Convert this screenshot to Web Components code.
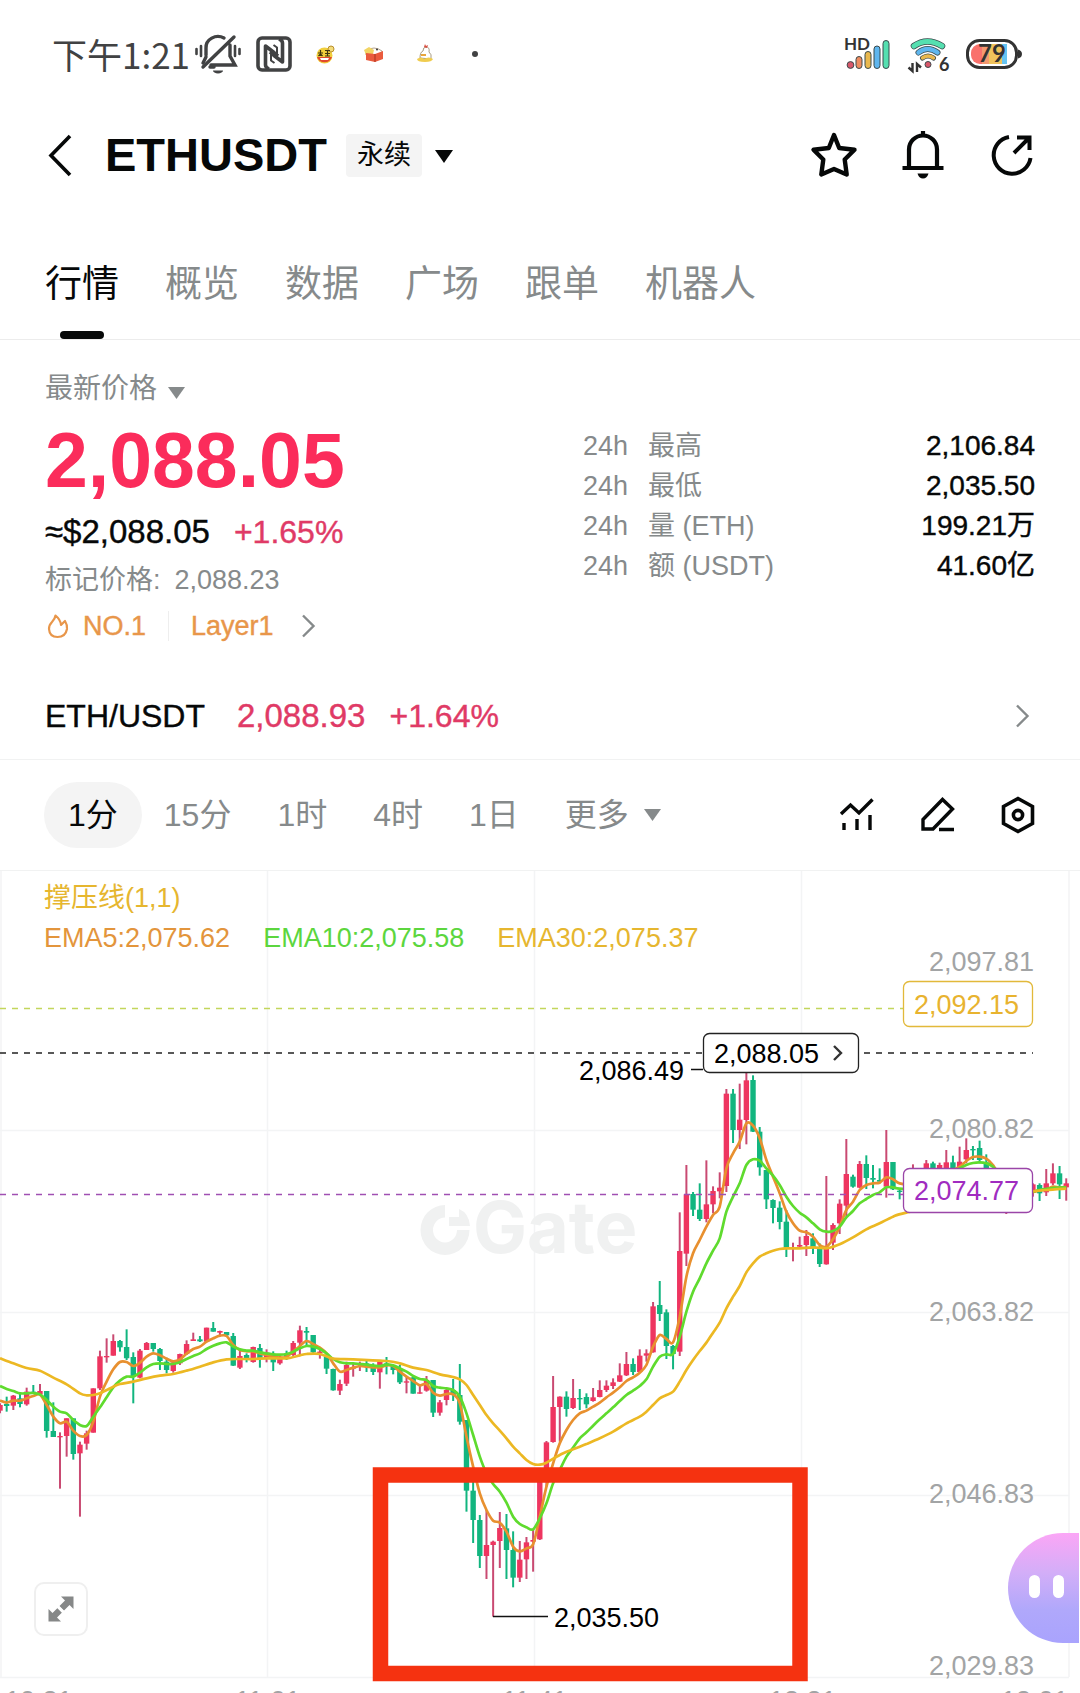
<!DOCTYPE html>
<html lang="zh-CN">
<head>
<meta charset="utf-8">
<meta name="viewport" content="width=device-width, initial-scale=1">
<title>ETHUSDT 永续</title>
<style>
  body {
    margin: 0;
    background: #fff;
    color: #060808;
    font-family: "Liberation Sans", "Noto Sans CJK SC", sans-serif;
    font-size: 27px;
    --gutter: 45px;
    --muted: #868a8b;
    --line: #f1f2f2;
    --down: #e03a66;
    --hot: #e8964a;
  }
</style>
</head>
<body>
<market-page></market-page>

<script>
const base = `
  *, *::before { box-sizing: border-box; }
  svg { display: block; flex: none; overflow: visible; }
  a { color: inherit; text-decoration: none; }
  button { font: inherit; color: inherit; background: none; border: 0; padding: 0; margin: 0; cursor: pointer; }
`;
function define(name, html, setup) {
  customElements.define(name, class extends HTMLElement {
    constructor() {
      super();
      this.attachShadow({ mode: "open" }).innerHTML = `<style>${base}</style>` + html;
    }
    connectedCallback() { if (setup) setup.call(this, this.shadowRoot); }
  });
}

/* Phone status bar */
define("status-bar", `
<style>
  :host { display: flex; align-items: center; height: 108px; padding: 0 58px 0 52px; color: #414243; }
  time { font-family: "Noto Sans CJK SC", sans-serif; font-size: 35px; line-height: 48px; margin-right: 4px; }
  .left, .right { display: flex; align-items: center; }
  .right { margin-left: auto; gap: 15px; }
  text { font-family: Lato, sans-serif; font-weight: 700; fill: #333; }
</style>
<div class="left">
  <time>下午1:21</time>
  <svg width="48" height="42" viewBox="0 0 48 42" fill="none" stroke="#414243" stroke-width="3.4" stroke-linecap="round">
    <path d="M12 22V15a12 11 0 0 1 18-10M36 12v11l5 9H17M9 34 40 4M16 34h4"/>
    <path d="M12 24l-3 6" />
    <path d="M19 37.500a5 3 0 0 0 10 0z" fill="#414243" stroke="none"/>
    <path d="M2.500 16v5M7 13v10M41 13v10M45.500 16v5" stroke-width="2.600"/>
  </svg>
  <svg style="margin-left:14px" width="36" height="36" viewBox="0 0 36 36" fill="none" stroke="#414243" stroke-width="3.600" stroke-linejoin="round">
    <rect x="2" y="2" width="32" height="32" rx="4"/>
    <path d="M13 33c-2.500-1-3.500-2-3.500-4V10L18 16.500 22 20M23 3c2.500 1 3.500 2 3.500 4v19L18 19.500 14 16"/>
    <path d="M15 14v10.500l3.500 2.500M21 22V11.500L17.500 9" stroke-width="2"/>
  </svg>
  <svg style="margin-left:24px" width="19" height="19" viewBox="0 0 19 19">
    <circle cx="8.500" cy="10.500" r="8" fill="#f1cf3c"/><path d="M1 12h15a8 8 0 0 1-15 0z" fill="#e2492f"/>
    <path d="M4 13h9l-1 2H5z" fill="#fff"/><circle cx="15" cy="4" r="3" fill="#f3dc7c" stroke="#b98e2c"/>
    <path d="M2 8h5M4.500 5v6M2.500 11l2-2 2 2M9 5.500h5M11.500 5v6M9 8.500h5M9 11h5" stroke="#3f360f" stroke-width="1.200"/>
  </svg>
  <svg style="margin-left:29px" width="21" height="16" viewBox="0 0 21 16">
    <path d="M2 5q8-6 16 0v4H2z" fill="#fff" stroke="#b5a490"/><path d="M0 4l5-3 5 3-1 4-7 1z" fill="#f2d564"/>
    <path d="M2 7l9 1 8-3v8l-8 3-9-2z" fill="#ea5b3d"/><path d="M11 8v8" stroke="#a93320"/><circle cx="13" cy="3.500" r="1" fill="#333"/>
  </svg>
  <svg style="margin-left:31px" width="18" height="20" viewBox="0 0 18 20">
    <path d="M4 14q0-6 3-7 0-4 3-4 4 0 3 5 3 2 2 7z" fill="#fff" stroke="#a79a81"/>
    <path d="M1 15q4-3 7 0 5-3 9 0-1 3-8 3-8 0-8-3z" fill="#f0cc4e"/><path d="M8 3l1-3 1 2 2-1-1 3z" fill="#d94d40"/><path d="M5 10h5v2H5z" fill="#e8a53c"/>
  </svg>
  <svg style="margin-left:38px" width="6" height="6"><circle cx="3" cy="3" r="3" fill="#414243"/></svg>
</div>
<div class="right">
  <svg width="46" height="36" viewBox="0 0 46 36" stroke="#3b4a4c" stroke-width="1">
    <text x="0" y="14" font-size="17" stroke="none">HD</text>
    <circle cx="6.500" cy="29" r="3.400" fill="#d9576a"/>
    <rect x="12" y="20.500" width="6" height="12" rx="3" fill="#ee8c60"/>
    <rect x="21" y="15.500" width="6" height="17" rx="3" fill="#e9b84e"/>
    <rect x="30" y="10" width="6" height="22.500" rx="3" fill="#5fb6ee"/>
    <rect x="39" y="4.500" width="6" height="28" rx="3" fill="#55dfb0"/>
  </svg>
  <svg width="46" height="38" viewBox="0 0 46 38">
    <g fill="none" stroke-linecap="round">
      <path d="M9 11q13-9 28 0" stroke="#3b4a4c" stroke-width="6.500"/><path d="M9 11q13-9 28 0" stroke="#55dfb0" stroke-width="5"/>
      <path d="M13.500 17.500q9-7 19 0" stroke="#3b4a4c" stroke-width="6"/><path d="M13.500 17.500q9-7 19 0" stroke="#5fb6ee" stroke-width="4.500"/>
      <path d="M17.500 23q5.500-4 11 0" stroke="#3b4a4c" stroke-width="5"/><path d="M17.500 23q5.500-4 11 0" stroke="#e9b84e" stroke-width="3.500"/>
    </g>
    <circle cx="23" cy="29.500" r="3" fill="#d9576a" stroke="#3b4a4c"/>
    <path d="M7.500 28v8l-4-3.500M12 37v-8l4 3.500" fill="none" stroke="#333" stroke-width="2.400"/>
    <text x="34" y="36" font-size="18">6</text>
  </svg>
  <svg width="56" height="30" viewBox="0 0 56 30">
    <rect x="1.500" y="1.500" width="49" height="27" rx="12" fill="#fff" stroke="#333" stroke-width="3"/>
    <path d="M52 10.500q4 1 4 4.500t-4 4.500z" fill="#333"/>
    <path d="M14 5h3v20h-3a9 9 0 0 1-9-9v-2a9 9 0 0 1 9-9z" fill="#f9716c"/>
    <path d="M16 5h7v20h-7z" fill="#f49a70"/><path d="M23 5h13v20H23z" fill="#f0c35c"/><path d="M36 5h5v20h-5z" fill="#66c4f2"/>
    <text x="12" y="23" font-size="24" fill="#222">79</text>
  </svg>
</div>`);

/* Title row */
define("pair-header", `
<style>
  :host { display: flex; align-items: center; height: 92px; padding: 2px var(--gutter) 0; }
  button { display: flex; align-items: center; }
  h1 { margin: 0 0 0 32px; font-size: 47px; line-height: 56px; font-weight: 700; }
  .kind { margin-left: 19px; gap: 13px; }
  .kind span { background: #f4f4f4; border-radius: 4px; padding: 0 11px; line-height: 43px; font-size: 27px; }
  .actions { margin-left: auto; display: flex; gap: 41px; }
</style>
<button aria-label="返回"><svg width="28" height="46" viewBox="0 0 28 46" fill="none" stroke="#060808" stroke-width="3.600"><path d="M25 4 6 23.500 25 43"/></svg></button>
<h1><slot></slot></h1>
<button class="kind"><span><slot name="kind"></slot></span><svg width="18" height="16" viewBox="0 0 18 16"><path d="M0 3h18L9 16z" fill="#060808"/></svg></button>
<div class="actions">
  <button aria-label="收藏"><svg width="48" height="48" viewBox="0 0 48 48" fill="none" stroke="#060808" stroke-width="4.400" stroke-linejoin="round"><path d="M25 4 30.200 17 45.500 18.800 35.700 28.500 37.700 43.500 25 38 12.300 43.500 14.300 28.500 4.500 18.800 19.800 17z"/></svg></button>
  <button aria-label="提醒"><svg width="48" height="48" viewBox="0 0 48 48" fill="none" stroke="#060808" stroke-width="4.200"><path d="M25 0v5M11 36V18.500a14 14 0 0 1 28 0V36M4.500 37h41"/><path d="M19.500 42.500h11q-1.500 5-5.500 5t-5.500-5z" fill="#060808" stroke="none"/></svg></button>
  <button aria-label="分享"><svg width="48" height="48" viewBox="0 0 48 48" fill="none" stroke="#060808" stroke-width="4"><path d="M22 6A18.500 18.500 0 1 0 43.500 27"/><path d="M27 22 41 8M30 6.500h12.500V19"/></svg></button>
</div>`);

/* Section tabs */
define("market-tabs", `
<style>
  :host { display: flex; gap: 46px; height: 140px; padding: 58px var(--gutter) 0; border-bottom: 1px solid #ececec; }
</style><slot></slot>`);
define("market-tab", `
<style>
  :host { display: block; color: var(--muted); font-size: 37px; line-height: 54px; }
  :host([active]) { color: #060808; }
  a { display: flex; flex-direction: column; align-items: center; gap: 19px; }
  :host([active]) a::after { content: ""; width: 44px; height: 8px; border-radius: 4px; background: #060808; }
</style><a href="#"><slot></slot></a>`);

/* Price summary */
define("stat-row", `
<style>
  :host { display: flex; line-height: 40px; }
  .k { color: var(--muted); display: flex; gap: 20px; }
  .v { margin-left: auto; font-size: 28px; -webkit-text-stroke: 0.4px currentColor; }
</style><span class="k"><span>24h</span><span><slot name="label"></slot></span></span><span class="v"><slot></slot></span>`);
define("price-summary", `
<style>
  :host { display: grid; grid-template-columns: 538fr 452fr; height: 333px; padding: 31px var(--gutter) 0; }
  .stats { padding-top: 55px; }
  .last { display: flex; align-items: center; gap: 11px; line-height: 36px; color: var(--muted); font-size: 28px; }
  .price { margin-top: 13px; font-size: 77px; line-height: 80px; font-weight: 700; color: #fb2c5b; }
  .fiat { display: flex; gap: 24px; margin-top: 12px; font-size: 33px; line-height: 40px; -webkit-text-stroke: 0.4px currentColor; }
  .fiat b { font-weight: 400; font-size: 32px; color: var(--down); }
  .mark { margin-top: 10px; line-height: 36px; color: var(--muted); display: flex; gap: 14px; }
  .tags { display: flex; align-items: center; margin-top: 10px; line-height: 36px; color: var(--hot); -webkit-text-stroke: 0.4px currentColor; }
  .tags i { width: 1px; height: 30px; background: #eee; margin: 0 22px; }
  .tags svg { margin: 0; }
</style>
<div>
  <button class="last">最新价格<svg width="17" height="12" viewBox="0 0 17 12" style="margin-top:8px"><path d="M0 0h17L8.500 12z" fill="#868a8b"/></svg></button>
  <div class="price">2,088.05</div>
  <div class="fiat"><span>≈$2,088.05</span><b>+1.65%</b></div>
  <div class="mark"><span>标记价格:</span><span>2,088.23</span></div>
  <a class="tags" href="#">
    <svg width="26" height="28" viewBox="0 0 26 28" fill="none" stroke="#e8964a" stroke-width="2.200" stroke-linejoin="round" style="margin-right:12px"><path d="M10.500 3.500q5 4 5.500 9.500l4-4q2.500 4 2 8-1.500 8-9.500 8T4 17q0-4 3-7 3-3 3.500-6.500z"/></svg>
    <span>NO.1</span><i></i><span>Layer1</span>
    <svg width="16" height="26" viewBox="0 0 16 26" fill="none" stroke="#868a8b" stroke-width="2.400" style="margin-left:26px"><path d="M3 2.500 13.500 13 3 23.500"/></svg>
  </a>
</div>
<div class="stats"><slot></slot></div>`);

/* Spot pair link */
define("spot-row", `
<style>
  :host { display: block; border-bottom: 1px solid var(--line); }
  a { display: flex; align-items: center; gap: 24px; height: 86px; padding: 0 50px 0 var(--gutter); font-size: 32px; -webkit-text-stroke: 0.4px currentColor; }
  .down { color: var(--down); }
  .price { font-size: 33px; }
  .name { margin-right: 8px; }
  svg { margin-left: auto; }
</style>
<a href="#"><span class="name"><slot></slot></span><span class="down price"><slot name="price"></slot></span><span class="down"><slot name="change"></slot></span>
<svg width="16" height="26" viewBox="0 0 16 26" fill="none" stroke="#868a8b" stroke-width="2.400"><path d="M3 2.500 13.500 13 3 23.500"/></svg></a>`);

/* Interval picker */
define("interval-bar", `
<style>
  :host { display: flex; align-items: center; height: 111px; padding: 0 var(--gutter) 0 44px; border-bottom: 1px solid var(--line); font-size: 32px; line-height: 66px; color: var(--muted); }
  .list, .tools { display: flex; align-items: center; }
  .list { gap: 46px; }
  .list .on { color: #060808; background: #f4f4f4; border-radius: 33px; padding: 0 24px; margin-right: -24px; }
  .more { display: flex; align-items: center; gap: 15px; }
  .tools { margin-left: auto; gap: 45px; }
</style>
<div class="list">
  <button class="on">1分</button><button>15分</button><button>1时</button><button>4时</button><button>1日</button>
  <button class="more">更多<svg width="17" height="12" viewBox="0 0 17 12"><path d="M0 0h17L8.500 12z" fill="#868a8b"/></svg></button>
</div>
<div class="tools">
  <button aria-label="指标"><svg width="36" height="36" viewBox="0 0 36 36" fill="none" stroke="#060808" stroke-width="3.400"><path d="M2 17 11.500 8 20 16 33.500 2.500M5 26v7M18 22v11M31 18v15"/></svg></button>
  <button aria-label="画线"><svg width="36" height="36" viewBox="0 0 36 36" fill="none" stroke="#060808" stroke-width="3.400"><path d="M3 32V22.500L22.500 2.500 32.500 12 13 32zM19 32.500h15"/></svg></button>
  <button aria-label="设置"><svg width="34" height="38" viewBox="0 0 34 38" fill="none" stroke="#060808" stroke-width="3.600"><path d="M17 2.500 31.500 10.500V27.500L17 35.500 2.500 27.500V10.500z"/><circle cx="17" cy="19" r="4.600"/></svg></button>
</div>`);

/* Candle rows: direction, high, body top, body bottom, low, in thirds of a pixel.
   The first block of rows is measured from 1280, the second from 1030. */
const early = `r370,375,392,400 g350,372,378,395 r345,347,377,390 g340,355,372,382 r323,335,373,377 g315,335,342,342 r312,333,343,345
g333,333,453,473 g367,453,471,471 r457,468,472,626 r415,415,468,530 g415,415,522,539 r485,494,520,710 r452,460,491,509 r325,325,458,458
r212,229,325,330 r175,228,232,248 r163,183,227,227 g180,183,202,215 g148,201,235,240 g217,231,290,370 r207,212,293,295 r186,189,210,210
g189,189,207,215 g204,207,243,270 g233,245,270,280 r240,247,273,278 r221,222,250,255 r181,192,222,225 r158,178,183,183 g168,178,184,186
r143,143,185,185 g126,144,155,155 r152,153,158,170 g156,156,166,170 g159,168,257,258 r208,228,263,267 g220,225,235,247 r200,201,246,248
g192,204,235,263 r208,218,235,247 g214,225,247,273 r225,230,250,254 g212,222,230,240 r183,189,225,228 r137,151,188,225 g141,153,158,200
g165,165,217,220 r210,215,220,236 g220,230,266,282 g266,267,331,332 r299,312,332,345 r245,255,311,318 r250,262,266,290 r245,250,255,273
g243,250,258,276 g250,255,276,285 r245,245,277,326 g231,250,258,283 g255,258,270,283 g255,268,307,312 r288,304,306,340 g290,292,341,341
r315,337,341,341 r288,300,332,335 g300,300,398,411 r360,367,398,407 r327,330,360,376 g297,330,345,363 g252,345,425,434 g420,420,632,695
g600,632,720,789 g705,720,828,864 r690,795,828,897 r782,785,795,1010 r696,744,783,864 g702,745,810,897 g754,810,893,922 r783,839,893,906
r771,787,838,897 r750,780,785,875 r565,600,778,780 r483,487,605,620 r288,381,486,488 r349,350,381,485 g334,350,387,410 r297,354,384,387
g327,354,357,390 g340,351,373,385 r324,352,363,365 r301,330,351,352 r301,317,330,336 r295,307,318,327 r250,286,305,306 r216,252,286,288
g235,252,276,285 r208,227,276,278 r208,220,227,245 r66,79,217,218 g3,75,102,123 g88,97,198,237 g195,198,222,268`;
const late = `r547,663,965,978 r405,493,671,708 g486,492,539,558 g460,539,567,573 r391,523,567,577 r469,483,523,550 r427,473,484,505
r177,191,468,486 g177,191,300,339 r161,269,300,357 r120,151,270,343 g136,150,305,306 g291,305,412,437 g420,420,508,537 g508,510,534,580
g514,533,576,598 g540,575,653,681 r638,652,656,694 r620,645,650,655 r600,618,645,678 g610,625,655,672 g640,655,702,711 r438,650,703,704
r580,585,638,660 r508,521,580,612 r327,432,527,560 g434,440,470,473 r393,402,473,475 g376,402,444,477 g405,444,449,475 g415,450,455,460
r300,396,470,503 g396,396,478,480 g475,482,485,508 g430,450,480,490 r403,415,450,460 g415,430,460,470 r390,400,440,450 g395,400,440,450
r398,405,440,450 r360,397,430,440 g377,397,425,440 r350,395,420,430 r325,360,388,400 g348,357,361,390 g332,354,390,400 g373,397,430,440
g420,430,470,480 g430,440,470,480 r430,440,470,552 g430,440,470,480 r440,450,480,490 g440,450,480,490 r460,463,488,500 g460,465,490,513
r417,460,487,498 r400,430,460,465 g408,430,463,507 r445,460,472,512`;
const ema5 = {
  early: "0:362 1:368 2:362 3:362 4:355 5:348 6:344 7:375 8:410 9:430 10:425 11:452 12:468 13:465 14:425 15:350 16:305 17:268 18:246 19:246 20:258 21:248 22:230 23:220 24:226 25:236 26:244 27:238 28:221 29:207 30:200 31:185 32:175 33:167 34:168 35:195 36:210 37:214 38:214 39:220 40:225 41:230 42:233 43:230 44:215 45:198 46:183 47:192 48:203 49:220 50:250 51:275 52:270 53:263 54:258 55:260 56:262 57:262 58:256 59:258 60:275 61:290 62:303 63:316 64:312 65:338 66:347 67:342 68:343 69:370 70:470 71:560 72:640 73:690 74:722 75:728 76:755 77:800 78:814 79:805 80:793 81:710 82:620 83:550 84:490 85:450 86:420 87:400 88:392 89:380 90:368 91:352 92:338 93:322 94:303 95:292 96:278 97:255 98:200 99:165 100:177 101:187",
  late: "102:860 103:740 104:670 105:630 106:590 107:555 108:530 109:415 110:370 111:335 112:280 113:287 114:325 115:390 116:440 117:490 118:545 119:580 120:602 121:607 122:620 123:645 124:650 125:628 126:590 127:540 128:515 129:480 130:465 131:460 132:458 133:442 134:448 135:460 137:465 140:450 142:430 144:410 145:393 146:381 147:380 148:386 149:405 151:460 154:488 156:481 157:478 158:470 159:472 160:471"
};
const ema10 = {
  early: "0:318 1:327 2:333 3:340 4:340 5:339 6:343 7:360 8:380 9:395 10:400 11:420 12:435 13:438 14:410 15:382 16:352 17:322 18:302 19:290 20:290 21:278 22:262 23:252 24:250 25:252 26:252 27:247 28:237 29:228 30:220 31:207 32:197 33:190 34:187 35:200 36:208 37:212 38:212 39:217 40:220 41:223 42:224 43:222 44:215 45:205 46:198 47:200 48:207 49:220 50:237 51:247 52:250 53:250 54:252 55:254 56:257 57:258 58:254 59:256 60:265 61:275 62:288 63:297 64:300 65:318 66:323 67:325 68:330 69:350 70:400 71:465 72:530 73:580 74:612 75:635 76:668 77:710 78:732 79:742 80:748 81:715 82:670 83:610 84:570 85:530 86:503 87:475 88:457 89:437 90:418 91:400 92:382 93:363 94:345 95:332 96:318 97:298 98:260 99:230 100:223 101:222",
  late: "102:920 103:845 104:785 105:745 106:700 107:662 108:625 109:545 110:500 111:460 112:405 113:388 114:392 115:415 116:437 117:465 118:500 119:528 120:548 121:562 122:580 123:598 124:605 125:603 126:590 127:562 128:543 129:520 130:507 131:495 132:487 133:472 134:472 135:476 138:475 142:440 144:415 145:405 146:399 147:397 148:400 149:410 151:450 154:485 156:480 158:474 160:472"
};
const ema30 = {
  early: "0:235 2:250 4:264 6:272 8:293 10:313 12:340 13:346 14:345 15:340 16:330 17:320 18:312 20:305 22:295 24:287 26:282 28:272 30:260 32:247 34:238 36:237 38:237 40:235 43:235 45:226 46:222 48:222 50:236 53:238 58:243 60:250 62:263 64:270 66:283 68:291 69:298 70:315 71:345 72:375 73:405 74:430 75:452 76:475 77:500 78:520 79:540 80:552 81:554 82:548 84:525 86:508 88:492 90:475 92:455 94:430 96:410 97:395 98:375 99:355 100:345 101:335 102:305 103:270 104:240",
  late: "105:963 106:938 107:908 108:878 109:835 110:800 111:768 112:727 113:700 114:680 115:670 116:662 117:657 118:655 120:655 122:652 124:655 125:650 126:643 128:622 130:598 132:580 134:560 136:548 145:510 154:486 157:480 160:476"
};
const PITCH = 6.664;
const yEarly = v => 1280 + v / 3, yLate = v => 1030 + v / 3;
function candles() {
  let out = "", i = 0;
  for (const [rows, y] of [[early, yEarly], [late, yLate]])
    for (const row of rows.trim().split(/\s+/)) {
      const [hi, top, bot, lo] = row.slice(1).split(",").map(v => y(+v));
      const up = row[0] === "r", x = i++ * PITCH;
      out += `<g fill="${up ? "#ee3560" : "#12b57f"}"><path fill="${up ? "#c94a72" : "#12b57f"}" d="M${x - 1} ${hi}h2V${Math.max(lo, bot)}h-2z"/><path d="M${x - 2.7} ${top}h5.400V${Math.max(bot, top + 1.3)}h-5.400z"/></g>`;
    }
  return out;
}
function curve(series, color) {
  const pts = [];
  for (const [part, y] of [[series.early, yEarly], [series.late, yLate]])
    for (const p of part.split(" ")) { const [i, v] = p.split(":"); pts.push([i * PITCH, y(+v)]); }
  let d = `M${pts[0]}`;
  for (let i = 0; i < pts.length - 1; i++) {
    const a = pts[i - 1] || pts[i], b = pts[i], c = pts[i + 1], e = pts[i + 2] || c, t = .15;
    d += `C${b[0] + (c[0] - a[0]) * t} ${b[1] + (c[1] - a[1]) * t} ${c[0] - (e[0] - b[0]) * t} ${c[1] - (e[1] - b[1]) * t} ${c}`;
  }
  return `<path d="${d}" fill="none" stroke="${color}" stroke-width="2.700"/>`;
}

define("kline-chart", `
<style>
  :host { display: block; position: relative; overflow: hidden; }
  .plot { width: 100%; height: auto; }
  .plot text { font-size: 27px; }
  .legend { position: absolute; left: 44px; top: 7px; line-height: 40px; color: #e6b62f; }
  .legend div { display: flex; gap: 33px; }
  .full { position: absolute; left: 34px; bottom: 57px; width: 54px; height: 54px; border: 2px solid #efefef; border-radius: 10px; background: #fff; display: grid; place-items: center; }
  .bot { position: absolute; right: 1px; bottom: 50px; width: 71px; height: 110px; border-radius: 55px 0 0 55px; background: linear-gradient(#fba6f6, #d3aef8 36%, #b0a8fb 70%, #a9a3fd); display: flex; gap: 13px; align-items: center; padding-left: 21px; }
  .bot i { width: 11px; height: 23px; border-radius: 6px; background: #fff; margin-bottom: 4px; }
</style>
<svg class="plot" viewBox="0 871 1080 822" role="img" aria-label="ETHUSDT K线"></svg>
<div class="legend">撑压线(1,1)<div><span style="color:#e3953c">EMA5:2,075.62</span><span style="color:#5cd63e">EMA10:2,075.58</span><span>EMA30:2,075.37</span></div></div>
<button class="full" aria-label="全屏"><svg width="26" height="26" viewBox="0 0 26 26" fill="#868888"><path d="M13 0.500h12.500V13L21.500 9l-5.500 5.500-4.500-4.500L17 4.500z"/><path d="M0.500 13v12.500H13L9 21.500l5.500-5.500-4.500-4.500L4.500 17z"/><path d="M9 10l7 7" stroke="#fff" stroke-width="2.500"/></svg></button>
<button class="bot" aria-label="助手"><i></i><i></i></button>
`, function (root) {
  const axis = [["2,097.81", 971], ["2,080.82", 1138], ["2,063.82", 1321], ["2,046.83", 1503], ["2,029.83", 1675]];
  const times = [["10:21", 5], ["11:01", 235], ["11:41", 502], ["12:21", 769], ["13:01", 1001]];
  root.querySelector(".plot").innerHTML = `
    <path d="M1 871V1677M267.500 871V1677M534.500 871V1677M801.500 871V1677M1069 871V1677M0 1130.500h1069M0 1312.500h1069M0 1495.500h1069M0 1677.500h1069" stroke="#f3f4f5" stroke-width="1.500" fill="none"/>
    <g fill="#f0f1f1">
      <path d="M445 1205a24.500 25 0 1 0 24.500 25h-12.500a12 12.500 0 1 1-12-12.500z"/><path d="M449 1217h10v-8q10 4 11 17h-21z"/>
      <text x="473" y="1253" style="font-family:Inter,sans-serif;font-size:72px;font-weight:700">Gate</text>
    </g>
    ${candles()}
    ${curve(ema5, "#e8902f")}${curve(ema10, "#5fdb2e")}${curve(ema30, "#ecb823")}
    <g fill="none" stroke-width="1.500" stroke-dasharray="6 6">
      <path d="M0 1008.500H903" stroke="#c3d65c"/><path d="M0 1053H703M864 1053h169" stroke="#222"/><path d="M0 1194.500H903" stroke="#a04fb2"/>
    </g>
    <g fill="#a2a4a5" text-anchor="end">${axis.map(([t, y]) => `<text x="1034" y="${y}">${t}</text>`).join("")}</g>
    <g fill="#a2a4a5">${times.map(([t, x]) => `<text x="${x}" y="1710">${t}</text>`).join("")}</g>
    <rect x="903.500" y="981.500" width="129" height="45" rx="6" fill="#fff" stroke="#e2b93a" stroke-width="1.300"/>
    <text x="914" y="1014" fill="#e8b32f">2,092.15</text>
    <rect x="903.500" y="1168.500" width="129" height="44" rx="6" fill="#fff" stroke="#9a45a8" stroke-width="1.300"/>
    <text x="914" y="1200" fill="#a02cc0">2,074.77</text>
    <path d="M691 1069.500h12M493 1616.500h55" stroke="#111" stroke-width="1.300"/>
    <rect x="703.500" y="1033.500" width="155" height="39" rx="6" fill="#fff" stroke="#222" stroke-width="1.300"/>
    <text x="714" y="1063">2,088.05</text>
    <path d="M834 1046l7 7-7 7" fill="none" stroke="#333" stroke-width="2.400"/>
    <text x="579" y="1080">2,086.49</text>
    <text x="554" y="1627">2,035.50</text>
    <rect x="380.500" y="1475" width="419.500" height="198.500" fill="none" stroke="#f53210" stroke-width="15.500"/>`;
});

define("market-page", `
<style>:host { display: block; }</style>
<status-bar></status-bar>
<pair-header>ETHUSDT<span slot="kind">永续</span></pair-header>
<market-tabs>
  <market-tab active>行情</market-tab><market-tab>概览</market-tab><market-tab>数据</market-tab><market-tab>广场</market-tab><market-tab>跟单</market-tab><market-tab>机器人</market-tab>
</market-tabs>
<price-summary>
  <stat-row><span slot="label">最高</span>2,106.84</stat-row>
  <stat-row><span slot="label">最低</span>2,035.50</stat-row>
  <stat-row><span slot="label">量 (ETH)</span>199.21万</stat-row>
  <stat-row><span slot="label">额 (USDT)</span>41.60亿</stat-row>
</price-summary>
<spot-row>ETH/USDT<span slot="price">2,088.93</span><span slot="change">+1.64%</span></spot-row>
<interval-bar></interval-bar>
<kline-chart></kline-chart>`);
</script>
</body>
</html>
